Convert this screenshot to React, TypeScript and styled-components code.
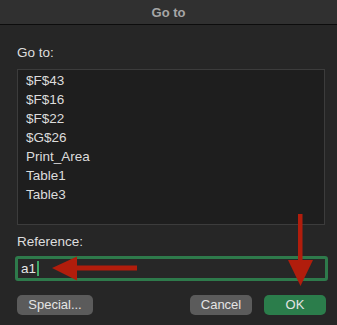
import React from 'react';
import styled, { createGlobalStyle } from 'styled-components';

const GlobalStyle = createGlobalStyle`
  html, body {
    margin: 0;
    padding: 0;
    background: #262626;
  }
  body {
    font-family: "Liberation Sans", Arial, sans-serif;
    -webkit-font-smoothing: antialiased;
  }
`;

const Dialog = styled.div`
  position: relative;
  width: 337px;
  height: 325px;
  background: #262626;
  display: flex;
  flex-direction: column;
  overflow: hidden;
`;

const TitleBar = styled.div`
  height: 24px;
  background: #303030;
  border-bottom: 1px solid #0c0c0c;
  display: flex;
  align-items: center;
  justify-content: center;
  color: #a6a6a6;
  font-size: 13px;
  font-weight: 700;
`;

const Body = styled.div`
  display: flex;
  flex-direction: column;
  padding: 20px 11px 0 17px;
`;

const Label = styled.div<{ gap: number; top?: number }>`
  color: #dedede;
  font-size: 13.5px;
  line-height: 16px;
  margin-top: ${p => p.top ?? 0}px;
  margin-bottom: ${p => p.gap}px;
`;

const List = styled.ul`
  all: unset;
  display: block;
  box-sizing: border-box;
  width: 308px;
  height: 156px;
  background: #1e1e1e;
  border: 1px solid #3c3c3c;
  padding: 1px 0 0 8px;
`;

const Item = styled.li`
  list-style: none;
  height: 19px;
  line-height: 19px;
  color: #dcdcdc;
  font-size: 13.5px;
`;

const Input = styled.div`
  box-sizing: border-box;
  margin: 0 -2px 0 -2px;
  height: 25px;
  border: 3px solid #2e7a4b;
  border-radius: 3px;
  background: #272727;
  display: flex;
  align-items: center;
  padding-left: 3px;
  color: #e6e6e6;
  font-size: 13.5px;
`;

const Caret = styled.span`
  display: inline-block;
  width: 2px;
  height: 15px;
  margin-left: 1px;
  background: #3fa866;
`;

const ButtonRow = styled.div`
  display: flex;
  align-items: center;
  margin-top: 14px;
  gap: 12px;
`;

const Button = styled.button<{ primary?: boolean; w: number }>`
  all: unset;
  box-sizing: border-box;
  width: ${p => p.w}px;
  height: 20px;
  border-radius: 5px;
  background: ${p => (p.primary ? '#2b7d4b' : '#5b5b5b')};
  color: #e4e4e4;
  font-size: 13px;
  text-align: center;
  line-height: 20px;
`;

const Spacer = styled.div`
  flex: 1;
`;

const Arrows = styled.svg`
  position: absolute;
  left: 0;
  top: 0;
  pointer-events: none;
`;

const names = ['$F$43', '$F$16', '$F$22', '$G$26', 'Print_Area', 'Table1', 'Table3'];

export default function App() {
  return (
    <>
      <GlobalStyle />
      <Dialog>
        <TitleBar>Go to</TitleBar>
        <Body>
          <Label gap={8}>Go to:</Label>
          <List>
            {names.map(n => (
              <Item key={n}>{n}</Item>
            ))}
          </List>
          <Label gap={6} top={9}>Reference:</Label>
          <Input>
            a1<Caret />
          </Input>
          <ButtonRow>
            <Button w={76}>Special...</Button>
            <Spacer />
            <Button w={62}>Cancel</Button>
            <Button w={62} primary>OK</Button>
          </ButtonRow>
        </Body>
        <Arrows width="337" height="325" viewBox="0 0 337 325">
          <rect x="74" y="265.5" width="63" height="5" fill="#b11d0c" />
          <polygon points="52,268 77,256.5 77,280.5" fill="#b11d0c" />
          <rect x="298" y="214" width="4.5" height="48" fill="#b11d0c" />
          <polygon points="288,260 313,260 300.5,286" fill="#b11d0c" />
        </Arrows>
      </Dialog>
    </>
  );
}
